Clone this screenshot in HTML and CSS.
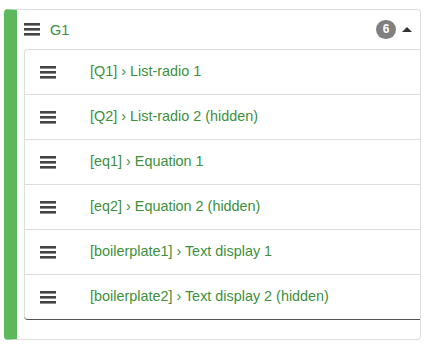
FILE: index.html
```html
<!DOCTYPE html>
<html lang="en">
<head>
  <meta charset="UTF-8">
  <meta name="viewport" content="width=device-width, initial-scale=1.0">
  <title>Group G1</title>
  <link rel="stylesheet" href="styles.css">
</head>
<body>
  <div class="grupo">
    <div class="cabecera">
      <svg class="barras" width="16" height="13" viewBox="0 0 16 13"><rect y="0" width="16" height="2.6"/><rect y="5" width="16" height="2.6"/><rect y="10" width="16" height="2.6"/></svg>
      <span class="titulo">G1</span>
      <span class="contador">6</span>
      <span class="flecha"></span>
    </div>
    <ul class="lista">
      <li>
        <svg class="barras" width="16" height="13" viewBox="0 0 16 13"><rect y="0" width="16" height="2.6"/><rect y="5" width="16" height="2.6"/><rect y="10" width="16" height="2.6"/></svg>
        <span>[Q1] › List-radio 1</span>
      </li>
      <li>
        <svg class="barras" width="16" height="13" viewBox="0 0 16 13"><rect y="0" width="16" height="2.6"/><rect y="5" width="16" height="2.6"/><rect y="10" width="16" height="2.6"/></svg>
        <span>[Q2] › List-radio 2 (hidden)</span>
      </li>
      <li>
        <svg class="barras" width="16" height="13" viewBox="0 0 16 13"><rect y="0" width="16" height="2.6"/><rect y="5" width="16" height="2.6"/><rect y="10" width="16" height="2.6"/></svg>
        <span>[eq1] › Equation 1</span>
      </li>
      <li>
        <svg class="barras" width="16" height="13" viewBox="0 0 16 13"><rect y="0" width="16" height="2.6"/><rect y="5" width="16" height="2.6"/><rect y="10" width="16" height="2.6"/></svg>
        <span>[eq2] › Equation 2 (hidden)</span>
      </li>
      <li>
        <svg class="barras" width="16" height="13" viewBox="0 0 16 13"><rect y="0" width="16" height="2.6"/><rect y="5" width="16" height="2.6"/><rect y="10" width="16" height="2.6"/></svg>
        <span>[boilerplate1] › Text display 1</span>
      </li>
      <li>
        <svg class="barras" width="16" height="13" viewBox="0 0 16 13"><rect y="0" width="16" height="2.6"/><rect y="5" width="16" height="2.6"/><rect y="10" width="16" height="2.6"/></svg>
        <span>[boilerplate2] › Text display 2 (hidden)</span>
      </li>
    </ul>
  </div>
</body>
</html>
```

FILE: styles.css
```css
body {
  margin: 0;
  padding: 9px 0 0 4px;
  font-family: 'Liberation Sans', Arial, sans-serif;
  font-size: 14.4px;
  background: white;
}
.grupo {
  width: 403px;
  height: 329px;
  border: 1px solid #ddd;
  border-left: 13px solid #5cb85c;
  border-radius: 4px;
}
.cabecera {
  display: flex;
  align-items: center;
  height: 39px;
  padding-left: 7px;
  padding-right: 8px;
}
.barras {
  fill: #444;
  flex-shrink: 0;
}
.titulo {
  color: #3d8f3d;
  margin-left: 10px;
  flex: 1;
}
.contador {
  background: #808080;
  color: white;
  font-size: 12px;
  font-weight: bold;
  min-width: 20px;
  height: 19px;
  line-height: 19px;
  border-radius: 10px;
  text-align: center;
}
.flecha {
  width: 0;
  height: 0;
  border-left: 5.5px solid transparent;
  border-right: 5.5px solid transparent;
  border-bottom: 5.5px solid #333;
  margin-left: 6px;
}
.lista {
  list-style: none;
  margin: 0 0 0 7px;
  padding: 0;
  border: 1px solid #ddd;
  border-right: none;
  border-bottom: none;
  border-radius: 4px 0 0 4px;
  box-shadow: 0 1px 0 #555;
}
.lista li {
  display: flex;
  align-items: center;
  height: 44px;
  padding-left: 15px;
  border-bottom: 1px solid #ddd;
  color: #3d8f3d;
}
.lista li:last-child {
  border-bottom: none;
}
.lista li span {
  margin-left: 34px;
  margin-top: -2px;
}
```
